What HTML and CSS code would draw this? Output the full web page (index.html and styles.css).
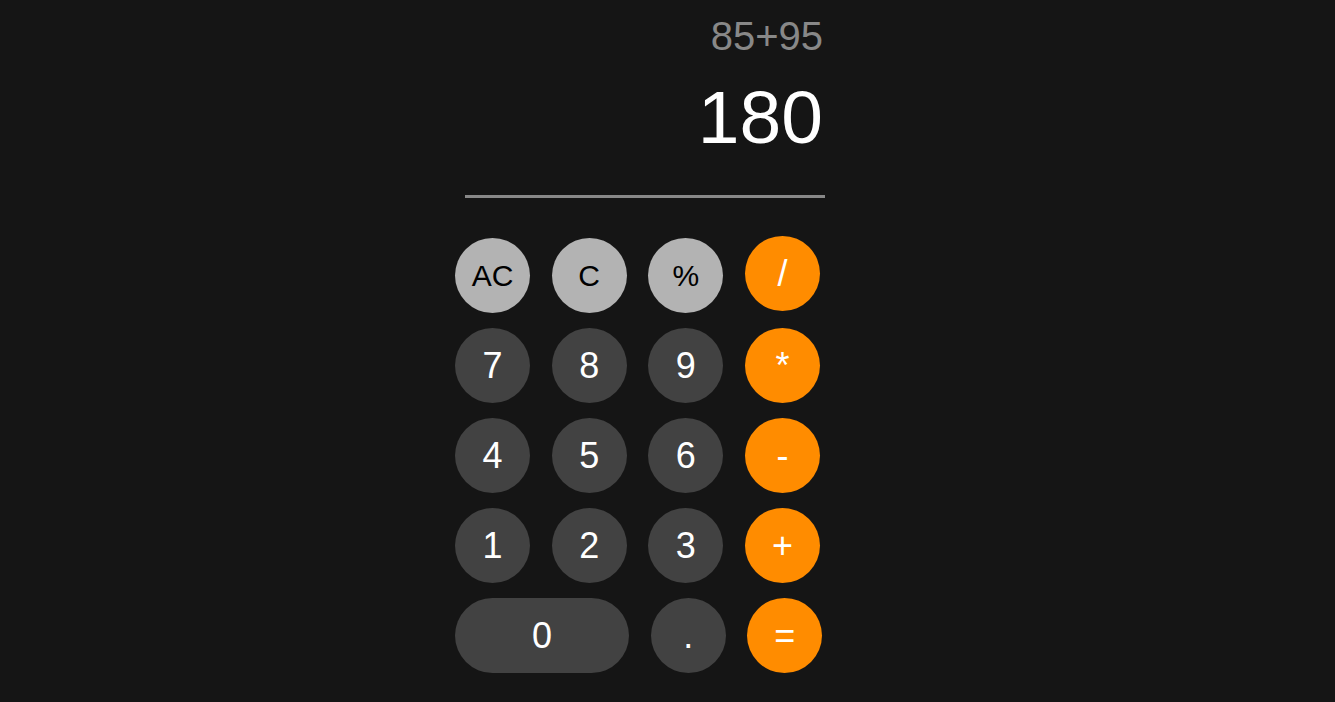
FILE: index.html
```html
<!DOCTYPE html>
<html lang="en">
<head>
<meta charset="utf-8">
<title>Calculator</title>
<link rel="stylesheet" href="styles.css">
</head>
<body>
<div class="calculator">
  <div class="display">
    <div class="expression">85+95</div>
    <div class="result">180</div>
  </div>
  <div class="keys">
    <div class="row">
      <button class="key func">AC</button>
      <button class="key func">C</button>
      <button class="key func">%</button>
      <button class="key op">/</button>
    </div>
    <div class="row">
      <button class="key num">7</button>
      <button class="key num">8</button>
      <button class="key num">9</button>
      <button class="key op">*</button>
    </div>
    <div class="row">
      <button class="key num">4</button>
      <button class="key num">5</button>
      <button class="key num">6</button>
      <button class="key op">-</button>
    </div>
    <div class="row">
      <button class="key num">1</button>
      <button class="key num">2</button>
      <button class="key num">3</button>
      <button class="key op">+</button>
    </div>
    <div class="row last">
      <button class="key num zero">0</button>
      <button class="key num">.</button>
      <button class="key op">=</button>
    </div>
  </div>
</div>
</body>
</html>
```

FILE: styles.css
```css
html, body {
  margin: 0;
  padding: 0;
  background: #151515;
  height: 100%;
}

body {
  font-family: "Liberation Sans", Arial, sans-serif;
  color: #ffffff;
}

.calculator {
  width: 425px;
  margin: 0 auto;
  padding-top: 13px;
}

.display {
  width: 360px;
  margin-left: 10px;
  padding-right: 2px;
  box-sizing: border-box;
  padding-bottom: 35px;
  border-bottom: 3px solid #888888;
  text-align: right;
}

.expression {
  font-size: 40px;
  line-height: 46px;
  color: #888888;
}

.result {
  margin-top: 15px;
  font-size: 75px;
  line-height: 86px;
  color: #ffffff;
}

.keys {
  margin-top: 38px;
  display: flex;
  flex-direction: column;
  gap: 15px;
}

.row {
  display: flex;
  align-items: baseline;
  gap: 21.7px;
}

.key {
  width: 75px;
  height: 75px;
  border: none;
  border-radius: 37.5px;
  padding: 0;
  margin: 0;
  font-family: "Liberation Sans", Arial, sans-serif;
  font-size: 36px;
  line-height: 75px;
  text-align: center;
  color: #ffffff;
  cursor: pointer;
}

.func {
  background: #b3b3b3;
  color: #000000;
  font-size: 30px;
}

.num {
  background: #424242;
}

.op {
  background: #ff8c00;
}

.zero {
  width: 174px;
}
```
